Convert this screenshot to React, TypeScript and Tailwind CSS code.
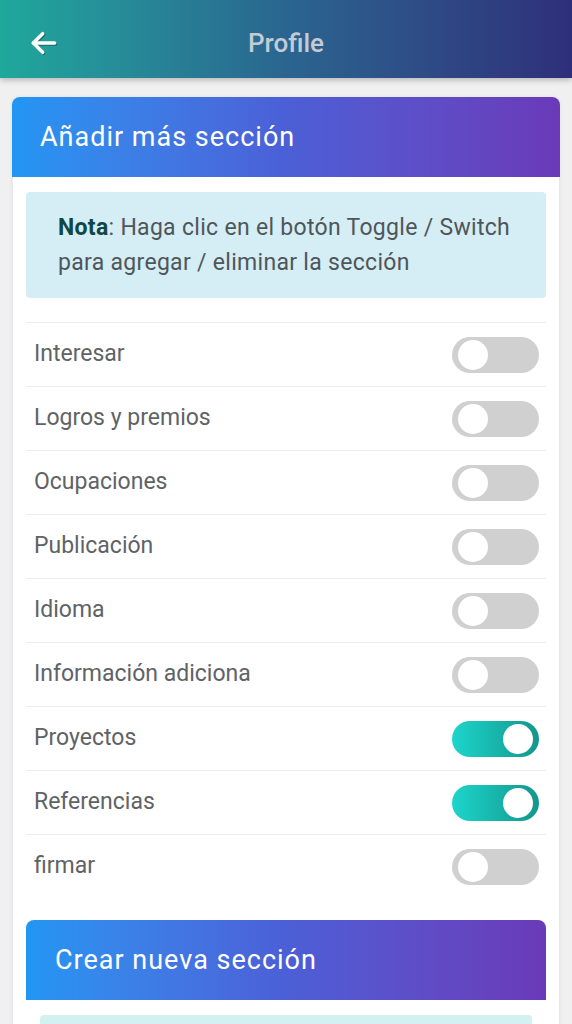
import React from "react";

const rows: { label: string; on: boolean }[] = [
  { label: "Interesar", on: false },
  { label: "Logros y premios", on: false },
  { label: "Ocupaciones", on: false },
  { label: "Publicación", on: false },
  { label: "Idioma", on: false },
  { label: "Información adiciona", on: false },
  { label: "Proyectos", on: true },
  { label: "Referencias", on: true },
  { label: "firmar", on: false },
];

function Toggle({ on }: { on: boolean }) {
  return on ? (
    <div className="w-[87px] h-[36px] rounded-full bg-gradient-to-r from-[#1dd5cb] to-[#12978c] flex items-center justify-end pr-[6px]">
      <div className="w-[30px] h-[30px] rounded-full bg-white" />
    </div>
  ) : (
    <div className="w-[87px] h-[36px] rounded-full bg-[#d0d0d0] flex items-center pl-[6px]">
      <div className="w-[30px] h-[30px] rounded-full bg-white" />
    </div>
  );
}

export default function App() {
  return (
    <div className="w-[572px] h-[1024px] overflow-hidden bg-[#f0f0f0] font-['Roboto',sans-serif]">
      <header className="h-[78px] pt-[8px] grid grid-cols-[100px_1fr_100px] items-center bg-gradient-to-r from-[#1fa89c] via-[#2a6590] to-[#2e2f7a] shadow-[0_2px_6px_rgba(0,0,0,0.25)]">
        <div className="pl-[28px] flex items-center">
          <svg width="32" height="32" viewBox="0 0 24 24" fill="none" stroke="#ffffff" strokeWidth="2.6" strokeLinecap="round" strokeLinejoin="round" className="drop-shadow-[1px_1px_0_rgba(0,0,0,0.3)]">
            <path d="M20 12H4" />
            <path d="M11 5l-7 7 7 7" />
          </svg>
        </div>
        <div className="text-center text-[26px] font-medium text-[#c4cbd4]">Profile</div>
        <div />
      </header>

      <div className="px-[12px] pt-[19px]">
        <div className="rounded-t-[8px] bg-white border border-[#ebe6ee] shadow-[0_0_4px_rgba(0,0,0,0.06)]">
          <div className="h-[80px] rounded-t-[8px] bg-gradient-to-r from-[#2196f3] via-[#4b5fd6] to-[#6a3ab8] flex items-center pl-[28px] -mx-px -mt-px">
            <span className="text-[27px] tracking-[1px] text-white">Añadir más sección</span>
          </div>
          <div className="px-[13px] pt-[15px]">
            <div className="rounded-[4px] bg-[#d5edf5] px-[32px] pt-[18px] pb-[18px] text-[23px] tracking-[0.3px] leading-[35px] text-[#4f5659]">
              <span className="font-bold text-[#0f4747]">Nota</span>: Haga clic en el botón Toggle / Switch para agregar / eliminar la sección
            </div>
            <div className="mt-[24px]">
              {rows.map((r) => (
                <div key={r.label} className="h-[64px] border-t border-[#ececec] flex items-center justify-between pl-[8px] pr-[7px]">
                  <span className="text-[23px] text-[#5f6366]">{r.label}</span>
                  <Toggle on={r.on} />
                </div>
              ))}
            </div>
            <div className="mt-[22px] rounded-t-[8px] overflow-hidden">
              <div className="h-[80px] bg-gradient-to-r from-[#2196f3] via-[#4b5fd6] to-[#6a3ab8] flex items-center pl-[29px]">
                <span className="text-[27px] tracking-[1px] text-white">Crear nueva sección</span>
              </div>
              <div className="bg-white pt-[15px] px-[14px]">
                <div className="h-[40px] rounded-[4px] bg-[#d3f1f0]" />
              </div>
            </div>
          </div>
        </div>
      </div>
    </div>
  );
}
